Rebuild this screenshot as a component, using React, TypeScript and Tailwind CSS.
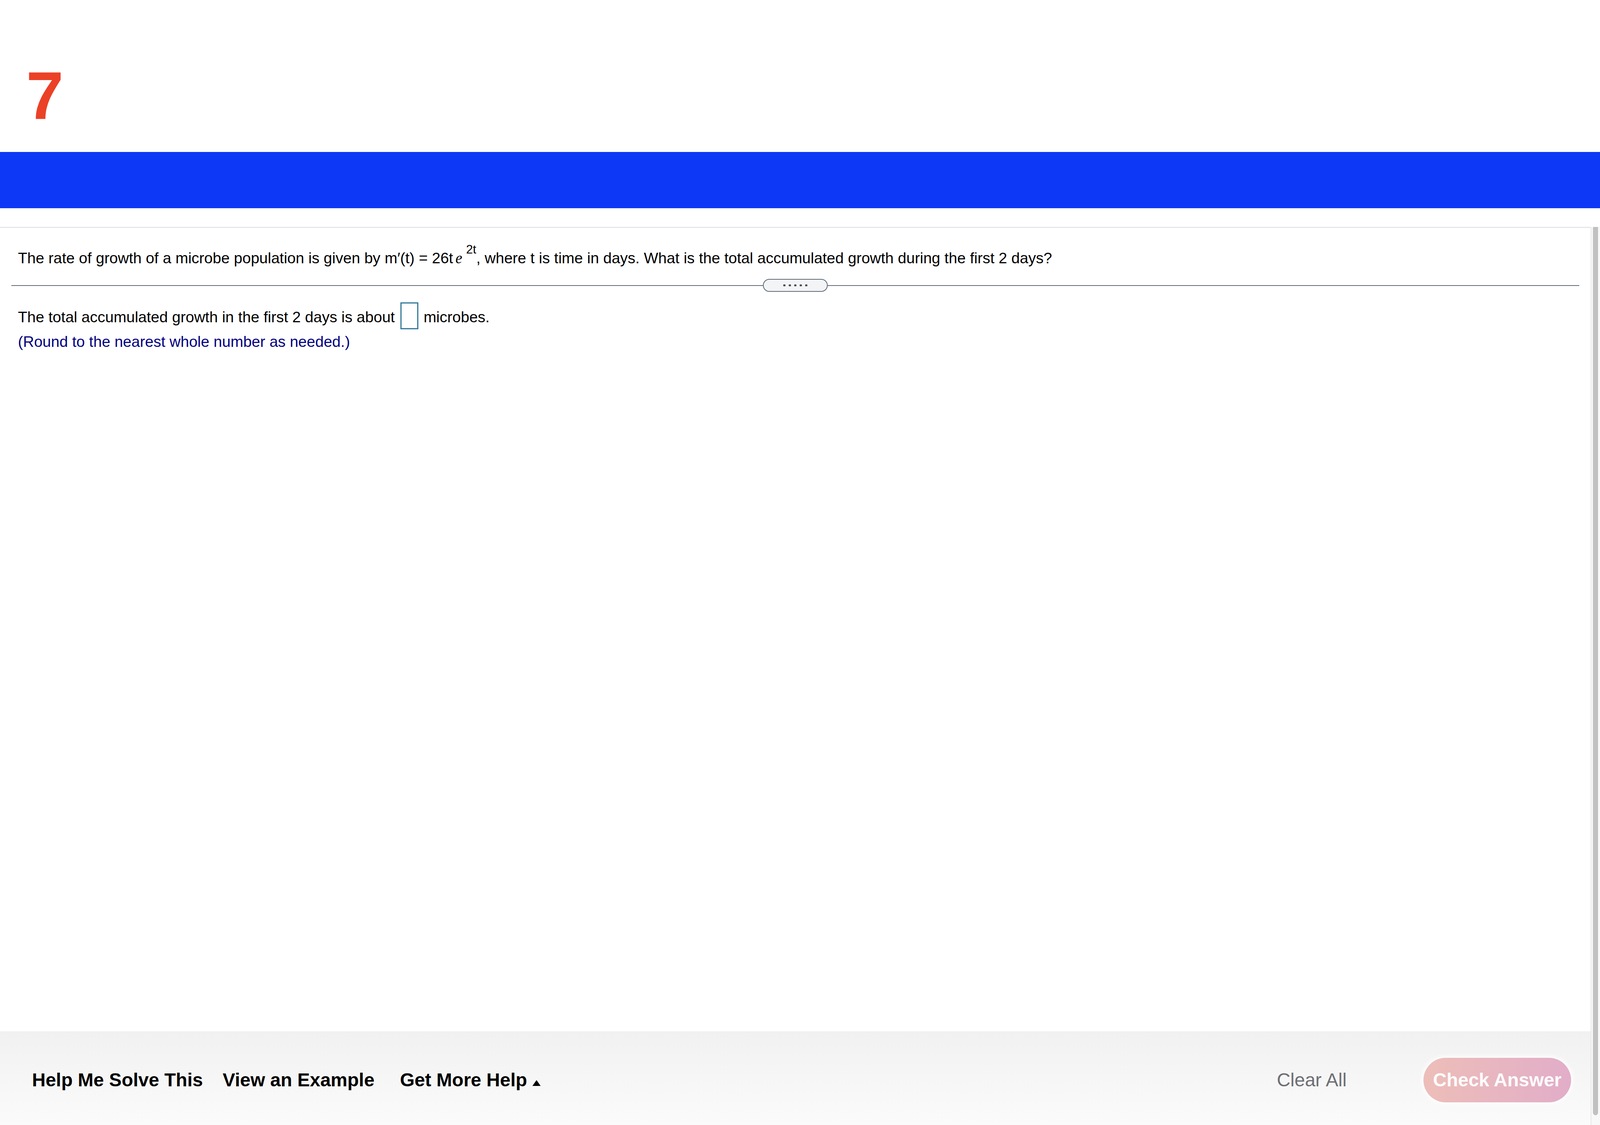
import React, { FC } from "react";

const Dots: FC = () => (
  <>
    {[0, 1, 2, 3, 4].map((i) => (
      <span key={i} className="h-[5px] w-[6px] rounded-[2px] bg-[#4b4f55]" />
    ))}
  </>
);

const App: FC = () => {
  return (
    <div className="flex h-screen flex-col overflow-hidden bg-white font-['Liberation_Sans',Arial,sans-serif] text-black">
      {/* question number */}
      <header className="h-[389px] shrink-0 pl-[67px] pt-[158px]">
        <span className="block text-[172px] font-bold leading-none text-[#eb4126]">
          7
        </span>
      </header>
      <div className="h-[144px] shrink-0 bg-[#0d38f5]" />

      <div className="mt-[48px] flex min-h-0 flex-1">
        <main className="flex min-w-0 flex-1 flex-col border-t-2 border-[#dcdce4]">
          <p className="pl-[46px] pt-[48px] text-[39px] leading-[60px]">
            The rate of growth of a microbe population is given by m′(t) = 26t
            <span className="ml-[6px] font-['Liberation_Serif',serif] italic">
              e
            </span>
            <sup className="top-[-25px] ml-[10px] text-[31px]">2t</sup>, where t
            is time in days. What is the total accumulated growth during the
            first 2 days?
          </p>

          <div className="mx-[29px] mt-[23px] flex h-[33px] items-center">
            <div className="h-[2px] flex-1 bg-[#5f6b78]" />
            <div className="flex h-[33px] w-[166px] items-center justify-center gap-[8px] rounded-full border-2 border-[#5f6b78] bg-[#f3f4f6]">
              <Dots />
            </div>
            <div className="h-[2px] flex-1 bg-[#5f6b78]" />
          </div>

          <div className="mt-[27px] pl-[46px] text-[39px] leading-[60px]">
            The total accumulated growth in the first 2 days is about{" "}
            <span className="mx-[3px] inline-block h-[69px] w-[46px] border-[3px] border-[#347a9b] align-[-18px]" />{" "}
            microbes.
          </div>
          <div className="mt-[2px] pl-[46px] text-[39px] leading-[60px] text-[#000080]">
            (Round to the nearest whole number as needed.)
          </div>

          <footer className="mt-auto flex h-[240px] shrink-0 items-center bg-linear-to-b from-[#f1f1f1] to-[#fbfbfb] pl-[82px] pr-[50px] pt-[10px] text-[48px] leading-[60px]">
            <button type="button" className="w-[488px] text-left font-bold">
              Help Me Solve This
            </button>
            <button type="button" className="w-[454px] text-left font-bold">
              View an Example
            </button>
            <button type="button" className="inline-flex items-center font-bold">
              Get More Help
              <svg width="21" height="15" viewBox="0 0 21 15" className="ml-[14px] mt-[14px]">
                <polygon points="10.5,0 21,15 0,15" fill="#000" />
              </svg>
            </button>

            <button type="button" className="ml-auto w-[200px] text-center text-[#6d6f73]">
              Clear All
            </button>
            <button
              type="button"
              className="ml-[186px] flex h-[114px] w-[378px] items-center justify-center rounded-full bg-linear-to-r from-[#edbeb8] to-[#e2adc9] font-bold text-[#fcfcfc] shadow-[0_0_10px_6px_rgba(255,255,255,0.7)]"
            >
              Check Answer
            </button>
          </footer>
        </main>

        {/* scrollbar */}
        <div className="flex w-[24px] shrink-0 border-l-2 border-[#e8e8e8] bg-[#f8f8f8] pb-[25px] pl-[4px]">
          <div className="w-[13px] rounded-b-full bg-[#c1c1c1]" />
        </div>
      </div>
    </div>
  );
};

export default App;
